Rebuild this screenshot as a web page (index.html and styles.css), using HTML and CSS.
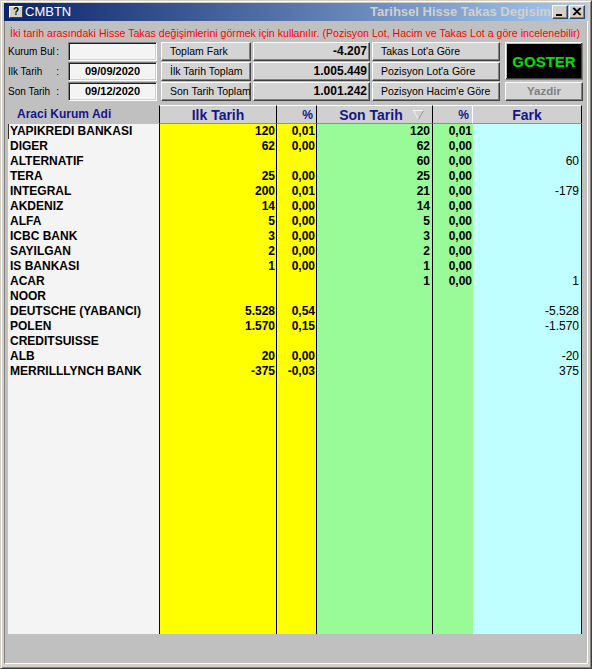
FILE: index.html
```html
<!DOCTYPE html>
<html lang="tr">
<head>
<meta charset="utf-8">
<title>CMBTN</title>
<link rel="stylesheet" href="styles.css">
</head>
<body>
<div class="window">
  <div class="titlebar">
    <span class="app-icon">?</span>
    <span class="app-name">CMBTN</span>
    <div class="title-right"><span>Tarihsel Hisse Takas Degisim</span></div>
    <button class="tb-btn" aria-label="Simge durumuna küçült">
      <svg width="16" height="14" viewBox="0 0 16 14"><rect x="4" y="9" width="6" height="2" fill="#000"/></svg>
    </button>
    <button class="tb-btn" aria-label="Kapat">
      <svg width="16" height="14" viewBox="0 0 16 14"><path d="M4 3 L11 10 M5 3 L12 10 M11 3 L4 10 M12 3 L5 10" stroke="#000" stroke-width="1.1" fill="none"/></svg>
    </button>
  </div>

  <div class="client">
    <div class="info">İki tarih arasındaki Hisse Takas değişimlerini görmek için kullanılır. (Pozisyon Lot, Hacim ve Takas Lot a göre incelenebilir)</div>

    <div class="controls">
      <label class="lbl r1"><span>Kurum Bul</span><span>:</span></label>
      <div class="input r1"></div>
      <label class="lbl r2"><span>Ilk Tarih</span><span>:</span></label>
      <div class="input date r2">09/09/2020</div>
      <label class="lbl r3"><span>Son Tarih</span><span>:</span></label>
      <div class="input date r3">09/12/2020</div>

      <div class="btn cb r1">Toplam Fark</div>
      <div class="btn cb r2">İlk Tarih Toplam</div>
      <div class="btn cb r3">Son Tarih Toplam</div>

      <div class="btn val r1">-4.207</div>
      <div class="btn val r2">1.005.449</div>
      <div class="btn val r3">1.001.242</div>

      <div class="btn cm r1">Takas Lot'a Göre</div>
      <div class="btn cm r2">Pozisyon Lot'a Göre</div>
      <div class="btn cm r3">Pozisyon Hacim'e Göre</div>

      <div class="btn goster">GOSTER</div>
      <div class="btn yazdir">Yazdir</div>
    </div>

    <div class="grid-head">
      <div class="h h-name">Araci Kurum Adi</div>
      <div class="h h-ilk">Ilk Tarih</div>
      <div class="h h-pct h-ip">%</div>
      <div class="h h-son">Son Tarih
        <svg class="sort" width="11" height="10" viewBox="0 0 11 10"><path d="M0.5 0.5 H10.5 L5.5 9.5 Z" fill="none" stroke="#f4f4f4" stroke-width="1"/><path d="M10.5 0.5 L5.5 9.5" stroke="#8c8c8c" stroke-width="1"/></svg>
      </div>
      <div class="h h-pct h-sp">%</div>
      <div class="h h-fark">Fark</div>
    </div>

    <div class="grid-body">
      <div class="col c-name">
        <div class="names">
          <div>YAPIKREDI BANKASI</div>
          <div>DIGER</div>
          <div>ALTERNATIF</div>
          <div>TERA</div>
          <div>INTEGRAL</div>
          <div>AKDENIZ</div>
          <div>ALFA</div>
          <div>ICBC BANK</div>
          <div>SAYILGAN</div>
          <div>IS BANKASI</div>
          <div>ACAR</div>
          <div>NOOR</div>
          <div>DEUTSCHE (YABANCI)</div>
          <div>POLEN</div>
          <div>CREDITSUISSE</div>
          <div>ALB</div>
          <div>MERRILLLYNCH BANK</div>
        </div>
      </div>
      <div class="col c-ilk">
        <div>120</div><div>62</div><div></div><div>25</div><div>200</div><div>14</div><div>5</div><div>3</div><div>2</div><div>1</div><div></div><div></div><div>5.528</div><div>1.570</div><div></div><div>20</div><div>-375</div>
      </div>
      <div class="col c-ip">
        <div>0,01</div><div>0,00</div><div></div><div>0,00</div><div>0,01</div><div>0,00</div><div>0,00</div><div>0,00</div><div>0,00</div><div>0,00</div><div></div><div></div><div>0,54</div><div>0,15</div><div></div><div>0,00</div><div>-0,03</div>
      </div>
      <div class="col c-son">
        <div>120</div><div>62</div><div>60</div><div>25</div><div>21</div><div>14</div><div>5</div><div>3</div><div>2</div><div>1</div><div>1</div>
      </div>
      <div class="col c-sp">
        <div>0,01</div><div>0,00</div><div>0,00</div><div>0,00</div><div>0,00</div><div>0,00</div><div>0,00</div><div>0,00</div><div>0,00</div><div>0,00</div><div>0,00</div>
      </div>
      <div class="col c-fark">
        <div></div><div></div><div>60</div><div></div><div>-179</div><div></div><div></div><div></div><div></div><div></div><div>1</div><div></div><div>-5.528</div><div>-1.570</div><div></div><div>-20</div><div>375</div>
      </div>
    </div>
  </div>
</div>
</body>
</html>
```

FILE: styles.css
```css
* { box-sizing: border-box; }

body {
  margin: 0;
  background: #d4d0c8;
  font-family: "Liberation Sans", Arial, sans-serif;
}

.window {
  width: 592px;
  height: 669px;
  border: 1px solid;
  border-color: #d4d0c8 #404040 #404040 #d4d0c8;
  box-shadow: inset 1px 1px #ffffff, inset -1px -1px #808080;
  background: #d4d0c8;
  padding: 2px 3px 4px 3px;
  display: flex;
  flex-direction: column;
}

/* ---------- title bar ---------- */
.titlebar {
  height: 18px;
  flex: none;
  display: flex;
  align-items: center;
  padding: 0 3px 0 5px;
  background: linear-gradient(to right, #0a246a, #a6caf0);
}

.app-icon {
  width: 14px;
  height: 12px;
  margin-right: 2px;
  background: #d4d0c8;
  border: 1px solid;
  border-color: #ffffff #404040 #404040 #ffffff;
  font-size: 10px;
  font-weight: bold;
  line-height: 10px;
  text-align: center;
  color: #000;
}

.app-name {
  color: #ffffff;
  font-size: 13px;
  line-height: 16px;
}

.title-right {
  margin-left: auto;
  width: 182px;
  overflow: hidden;
  white-space: nowrap;
  color: #d4d0c8;
  font-size: 13px;
  font-weight: bold;
  line-height: 16px;
}

.tb-btn {
  width: 16px;
  height: 14px;
  padding: 0;
  margin: 0 0 0 1px;
  background: #d4d0c8;
  border: 1px solid;
  border-color: #ffffff #404040 #404040 #ffffff;
  box-shadow: inset -1px -1px #808080;
  display: block;
}
.tb-btn svg {
  display: block;
  margin: -1px 0 0 -1px;
}
.tb-btn:first-of-type { margin-left: 0; }

/* ---------- client area ---------- */
.client {
  flex: 1;
  background: #c0c0c0;
  border-left: 1px solid #808080;
  border-right: 1px solid #ffffff;
  border-bottom: 1px solid #ffffff;
  display: flex;
  flex-direction: column;
  padding-left: 3px;
}

.info {
  height: 21px;
  padding: 6px 0 0 2px;
  color: #ff0000;
  font-size: 10.6px;
  line-height: 12px;
  white-space: nowrap;
}

/* ---------- controls ---------- */
.controls {
  display: grid;
  grid-template-columns: 60px 89px 4px 90px 2px 117px 2px 128px 5px 78px;
  grid-template-rows: 19px 19px 19px;
  row-gap: 1px;
  height: 59px;
  font-size: 10.5px;
}
.r1 { grid-row: 1; }
.r2 { grid-row: 2; }
.r3 { grid-row: 3; }

.lbl {
  grid-column: 1;
  width: 51px;
  display: flex;
  justify-content: space-between;
  align-items: center;
  white-space: nowrap;
  font-size: 10px;
  color: #000;
}

.input {
  grid-column: 2;
  background: #f4f4f4;
  border: 1px solid;
  border-color: #808080 #ffffff #ffffff #808080;
  box-shadow: inset 1px 1px #202020, inset -1px -1px #d4d0c8;
}
.input.date {
  font-size: 11px;
  font-weight: bold;
  text-align: center;
  line-height: 17px;
  color: #000;
}

.btn {
  background: #d4d4d4;
  border: 1px solid;
  border-color: #ffffff #404040 #404040 #ffffff;
  box-shadow: inset -1px -1px #808080;
  white-space: nowrap;
  overflow: hidden;
  line-height: 17px;
  color: #000;
}
.cb { grid-column: 4; padding-left: 8px; }
.cm { grid-column: 8; padding-left: 8px; }
.val {
  grid-column: 6;
  text-align: right;
  padding-right: 2px;
  font-size: 12px;
  font-weight: bold;
}

.goster {
  grid-column: 10;
  grid-row: 1 / 3;
  margin-bottom: 1px;
  background: #000000;
  color: #00e000;
  font-size: 15px;
  font-weight: bold;
  display: flex;
  align-items: center;
  justify-content: center;
  border-color: #ffffff #808080 #808080 #ffffff;
  box-shadow: inset -1px -1px #404040, inset 1px 1px #c0c0c0;
}

.yazdir {
  grid-column: 10;
  grid-row: 3;
  text-align: center;
  color: #808080;
  font-size: 11.5px;
  font-weight: bold;
}

/* ---------- grid header ---------- */
.grid-head {
  display: flex;
  margin-top: 4px;
  height: 19px;
  color: #16168c;
  font-weight: bold;
}
.h {
  height: 19px;
  line-height: 18px;
  white-space: nowrap;
}
.h-name {
  width: 151px;
  padding-left: 9px;
  font-size: 12px;
}
.h-ilk, .h-son, .h-fark, .h-pct {
  background: #d0d0d0;
  border-top: 1px solid #ffffff;
  border-bottom: 1px solid #909090;
  border-right: 1px solid #000000;
  text-align: center;
  font-size: 14px;
}
.h-ilk { width: 118px; border-left: 1px solid #000000; }
.h-pct {
  width: 40px;
  text-align: right;
  padding-right: 3px;
  font-size: 12px;
}
.h-sp { border-right: 1px solid #ffffff; }
.h-son { width: 116px; display: flex; justify-content: center; align-items: center; gap: 10px; }
.h-fark { width: 109px; }
.sort { display: block; margin-right: -14px; }

/* ---------- grid body ---------- */
.grid-body {
  display: flex;
  height: 510px;
  font-size: 12px;
  font-weight: bold;
  color: #000;
}
.col > div, .names > div {
  height: 15px;
  line-height: 15px;
  white-space: nowrap;
}
.col { text-align: right; }

.c-name {
  width: 151px;
  background: #f4f4f4;
  text-align: left;
}
.names {
  height: 301px;
  border-left: 1px solid #303030;
  padding-left: 1px;
}
.c-ilk {
  width: 118px;
  background: #ffff00;
  border-left: 1px solid #000000;
  border-right: 1px solid #000000;
  padding-right: 1px;
}
.c-ip {
  width: 40px;
  background: #ffff00;
  border-right: 1px solid #000000;
  padding-right: 1px;
}
.c-son {
  width: 116px;
  background: #98fb98;
  border-right: 1px solid #000000;
  padding-right: 2px;
}
.c-sp {
  width: 40px;
  background: #98fb98;
  padding-right: 1px;
}
.c-fark {
  width: 109px;
  background: #c0ffff;
  border-right: 1px solid #000000;
  padding-right: 2px;
  font-weight: normal;
}
```
